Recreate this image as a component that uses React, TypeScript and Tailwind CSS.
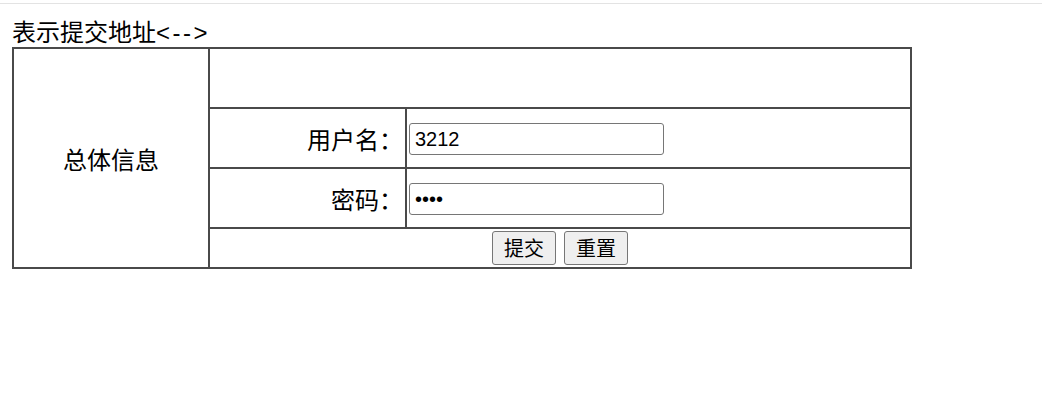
export default function App() {
  const cell = 'border-2 border-[#4a4a4a] p-[2px]';
  const textCell = 'border-2 border-[#4a4a4a] px-[2px] pt-[5px] pb-0';
  const inputCls =
    'block mt-px h-8 w-[255px] rounded-[3px] border border-[#767676] bg-white px-[5px] pt-px text-[20px] text-black outline-none';
  const buttonCls =
    'h-[34px] w-16 rounded-[3px] border border-[#767676] bg-[#efefef] pt-[2px] text-[20px] leading-none';

  return (
    <div className="min-h-screen bg-white text-black font-['Liberation_Sans','Noto_Sans_CJK_SC',sans-serif]">
      {/* thin frame line at the very top */}
      <div className="h-[3px]" />
      <div className="h-px bg-[#e3e3e3]" />

      <div className="px-3">
        <div className="h-[43px] pt-[14px] text-[24px] leading-[29px]">
          表示提交地址<span className="tracking-[2.5px]">&lt;--&gt;</span>
        </div>

        <form onSubmit={(e) => e.preventDefault()}>
          <table className="w-[898px] table-fixed border-collapse border-2 border-[#4a4a4a] text-[24px]">
            <colgroup>
              <col className="w-[196px]" />
              <col className="w-[197px]" />
              <col className="w-[505px]" />
            </colgroup>
            <tbody>
              <tr className="h-[60px]">
                <td rowSpan={4} className={`${textCell} text-center align-middle`}>
                  总体信息
                </td>
                <td colSpan={2} className={cell} />
              </tr>
              <tr className="h-[60px]">
                <td className={`${textCell} text-right align-middle`}>用户名：</td>
                <td className={`${cell} align-middle`}>
                  <input type="text" defaultValue="3212" className={inputCls} />
                </td>
              </tr>
              <tr className="h-[60px]">
                <td className={`${textCell} text-right align-middle`}>密码：</td>
                <td className={`${cell} align-middle`}>
                  <input type="password" defaultValue="1234" className={inputCls} />
                </td>
              </tr>
              <tr className="h-[40px]">
                <td colSpan={2} className={`${cell} text-center align-middle`}>
                  <div className="flex items-center justify-center gap-2">
                    <button type="submit" className={buttonCls}>
                      提交
                    </button>
                    <button type="reset" className={buttonCls}>
                      重置
                    </button>
                  </div>
                </td>
              </tr>
            </tbody>
          </table>
        </form>
      </div>
    </div>
  );
}
